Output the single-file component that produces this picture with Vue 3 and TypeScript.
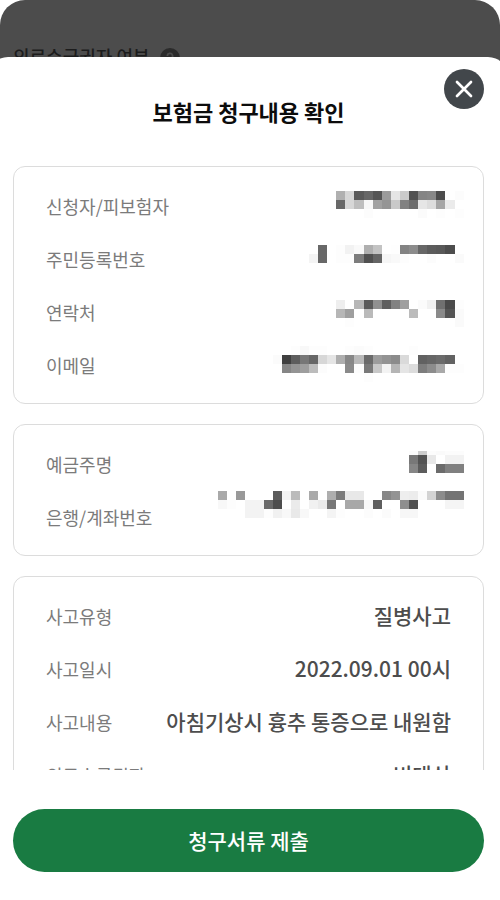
<script setup lang="ts">
interface MaskLine {
  column: number
  y: number
  // Grey level of each cell, as hex pairs.
  greys: string
  height?: number
}

interface Row {
  label: string
  value?: string
  mask?: MaskLine[]
}

interface Cell {
  x: number
  y: number
  w: number
  h: number
  fill: string
}

const MASK_WIDTH = 273
const MASK_HEIGHT = 53

const edge = (column: number): number => Math.floor(0.2 + column * 9.1)

function cells(mask: MaskLine[]): Cell[] {
  return mask.flatMap(({ column, y, greys, height = 9 }) =>
    (greys.match(/../g) ?? []).map((grey, i) => ({
      x: edge(column + i),
      y,
      w: edge(column + i + 1) - edge(column + i),
      h: height,
      fill: `#${grey}${grey}${grey}`,
    })),
  )
}

const groups: Row[][] = [
  [
    {
      label: '신청자/피보험자',
      mask: [
        { column: 16, y: 12, greys: 'b0d65a67559be5cb5285884cfffc' },
        { column: 16, y: 21, greys: '68d7bef7a195c9816de6dda6eb' },
        { column: 19, y: 30, greys: 'fcfffffffffffbfffdfffd' },
      ],
    },
    {
      label: '주민등록번호',
      mask: [
        { column: 14, y: 13, greys: '68fffdf2f9afc3fffe838c675c594d' },
        { column: 13, y: 22, greys: 'f468fffdfd7d5065f6f9fdfffffcfffffa' },
      ],
    },
    {
      label: '연락처',
      mask: [
        { column: 16, y: 15, greys: 'eeffb75a905f829ffffbf1704afd' },
        { column: 16, y: 24, greys: 'b69fffbaffffffffbbffff8a54fa' },
        { column: 17, y: 33, greys: 'fdfffffffffffffffffffffffa' },
      ],
    },
    {
      label: '이메일',
      mask: [
        { column: 11, y: 8, greys: 'fdf8fdfdfffffdfbfdfffffffffd' },
        { column: 9, y: 17, greys: 'fb3f5d7766d7e5ae87b96a9c938bdaff61666b62' },
        { column: 10, y: 26, greys: '86949ebcfcffff8afc79c8f3b5e5dc7d8ca9fdfd' },
        { column: 19, y: 35, greys: 'fd' },
      ],
    },
  ],
  [
    {
      label: '예금주명',
      mask: [
        { column: 24, y: 14, greys: 'fccdfcfafcfc', height: 4 },
        { column: 24, y: 18, greys: '7853e8fff2f2' },
        { column: 24, y: 27, greys: '865cff6b8080' },
      ],
    },
    {
      label: '은행/계좌번호',
      mask: [
        { column: 3, y: 1, greys: 'a9ff99ffffff5cf3bbffaaffae7be8e8ffff8793eeecfbd38c7474' },
        { column: 3, y: 10, greys: 'f8fdfff3f36a4dffebfff1ea77ffa8a8f85effff8e51fffffff5f5' },
        { column: 6, y: 19, greys: 'f3f3fdf1f8e9f8fffff4fdfffffcfffbfff7f7' },
      ],
    },
  ],
  [
    { label: '사고유형', value: '질병사고' },
    { label: '사고일시', value: '2022.09.01 00시' },
    { label: '사고내용', value: '아침기상시 흉추 통증으로 내원함' },
    { label: '의료수급권자', value: '비대상' },
  ],
]
</script>

<template>
  <div class="screen">
    <div class="behind">
      <span>의료수급권자 여부</span>
      <svg class="help" viewBox="0 0 20 20" aria-hidden="true">
        <circle cx="10" cy="10" r="10" fill="#2b2b2b" />
        <path d="M7.4 8a2.6 2.6 0 1 1 3.8 2.3c-.8.4-1.2.8-1.2 1.7M10 14v1.2" fill="none" stroke="#4c4c4c" stroke-width="1.8" />
      </svg>
    </div>

    <section class="sheet" role="dialog" aria-labelledby="sheet-title">
      <header class="head">
        <h1 id="sheet-title">보험금 청구내용 확인</h1>
        <button class="close" type="button" aria-label="닫기">
          <svg viewBox="0 0 40 40" aria-hidden="true">
            <path d="M13 13 27 27M27 13 13 27" fill="none" stroke="#fff" stroke-width="2.7" stroke-linecap="round" />
          </svg>
        </button>
      </header>

      <div class="content">
        <dl v-for="(group, g) in groups" :key="g" class="card">
          <div v-for="row in group" :key="row.label" class="row">
            <dt>{{ row.label }}</dt>
            <dd v-if="row.value">{{ row.value }}</dd>
            <dd v-else-if="row.mask" class="masked">
              <svg :width="MASK_WIDTH" :height="MASK_HEIGHT" shape-rendering="crispEdges" aria-hidden="true">
                <rect
                  v-for="(cell, c) in cells(row.mask)"
                  :key="c"
                  :x="cell.x"
                  :y="cell.y"
                  :width="cell.w"
                  :height="cell.h"
                  :fill="cell.fill"
                />
              </svg>
            </dd>
          </div>
        </dl>
      </div>

      <footer class="foot">
        <button class="submit" type="button">청구서류 제출</button>
      </footer>
    </section>
  </div>
</template>

<style>
body {
  margin: 0;
  background: #fff;
}
</style>

<style scoped>
.screen {
  box-sizing: border-box;
  display: flex;
  flex-direction: column;
  height: 100vh;
  overflow: hidden;
  border-radius: 25px 25px 0 0;
  background: #4c4c4c;
  font-family: "Noto Sans CJK KR", "Noto Sans", sans-serif;
}

.behind {
  box-sizing: border-box;
  display: flex;
  flex: none;
  align-items: flex-start;
  gap: 10px;
  height: 57px;
  padding: 43px 13px 0;
  color: #1c1c1c;
  font-size: 18px;
  font-weight: 500;
  line-height: 26px;
}

.help {
  flex: none;
  width: 20px;
  height: 20px;
  margin-top: 5px;
}

.sheet {
  position: relative;
  display: flex;
  flex: 1;
  flex-direction: column;
  min-height: 0;
  margin: 0 -8px 0 -12px;
  padding: 0 24px 0 25px;
  border-radius: 20px 20px 0 0;
  background: #fff;
}

.head {
  position: relative;
  flex: none;
  padding: 37px 0 38px;
}

h1 {
  margin: 0;
  color: #0c0c0c;
  font-size: 22px;
  font-weight: 700;
  line-height: 34px;
  text-align: center;
}

.close {
  position: absolute;
  top: 12px;
  right: 0;
  width: 40px;
  height: 40px;
  padding: 0;
  border: 0;
  border-radius: 50%;
  background: #42474b;
  cursor: pointer;
}

.close svg {
  display: block;
  width: 40px;
  height: 40px;
}

.content {
  display: flex;
  flex: 1;
  flex-direction: column;
  gap: 20px;
  min-height: 0;
  overflow: hidden;
}

.card {
  flex: none;
  margin: 0;
  padding: 12px 32px;
  border: 1px solid #dcdcdc;
  border-radius: 12px;
}

.row {
  display: flex;
  align-items: center;
  justify-content: space-between;
  height: 53px;
}

dt {
  flex: none;
  color: #7b7b7b;
  font-size: 18px;
  line-height: 26px;
}

dd {
  margin: 0;
  color: #4d4d4d;
  font-size: 21px;
  font-weight: 500;
  line-height: 30px;
  text-align: right;
  white-space: nowrap;
}

dd:not(.masked) {
  padding-bottom: 2px;
}

.masked {
  margin-right: -13px;
}

.masked svg {
  display: block;
}

.foot {
  flex: none;
  padding: 39px 0 28px;
}

.submit {
  display: block;
  width: 100%;
  height: 63px;
  padding: 0 0 2px;
  border: 0;
  border-radius: 32px;
  background: #197b42;
  color: #fff;
  font-family: inherit;
  font-size: 21px;
  font-weight: 500;
  line-height: 30px;
  cursor: pointer;
}
</style>
